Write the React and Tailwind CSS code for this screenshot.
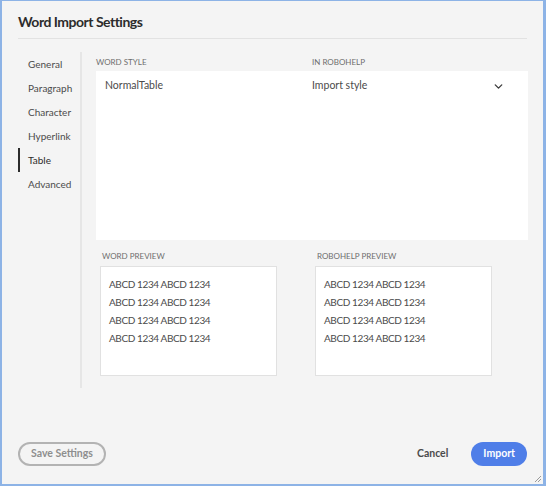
import { ChevronDown } from 'lucide-react';

const tabs = ['General', 'Paragraph', 'Character', 'Hyperlink', 'Table', 'Advanced'];

const PreviewBox = ({ label }) => (
  <div className="flex flex-col w-[177px]">
    <div className="text-[8px] uppercase text-[#6e6e6e] h-[20px] flex items-center pl-[2px]">{label}</div>
    <div className="h-[110px] bg-white border border-[#e1e1e1] pt-[8px] pl-[8px] text-[10px] tracking-[-0.4px] text-[#4b4b4b] leading-[18px]">
      {[...Array(4)].map((_, i) => (
        <div key={i}>ABCD 1234 ABCD 1234</div>
      ))}
    </div>
  </div>
);

export default function App() {
  return (
    <div
      className="w-[546px] h-[486px] bg-[#f4f4f4] border-[#8db3e6] border-t border-l-2 border-r-[3px] border-b-2 flex flex-col relative"
      style={{ fontFamily: 'Lato, "Open Sans", sans-serif' }}
    >
      <div className="mx-[16px] h-[38px] border-b border-[#e2e2e2] flex items-center">
        <h1 className="text-[14px] tracking-[-0.5px] font-bold text-[#2c2c2c] pt-[4px]">Word Import Settings</h1>
      </div>

      <div className="flex flex-1 pl-[16px] pr-[15px] pt-[13px]">
        <div className="w-[64px] border-r-2 border-[#e6e6e6] h-[336px] flex flex-col">
          {tabs.map((t) => (
            <div
              key={t}
              className={`h-[24px] flex items-center pl-[8px] text-[10px] border-l-2 ${
                t === 'Table' ? 'border-[#2c2c2c] text-[#2c2c2c]' : 'border-transparent text-[#4b4b4b]'
              }`}
            >
              {t}
            </div>
          ))}
        </div>

        <div className="flex-1 pl-[14px] flex flex-col">
          <div className="flex text-[8px] uppercase text-[#6e6e6e] h-[19px] items-center">
            <div className="w-[216px]">Word Style</div>
            <div>In Robohelp</div>
          </div>
          <div className="h-[169px] bg-white flex text-[10.5px] text-[#4b4b4b] pt-[7px]">
            <div className="w-[216px] pl-[9px]">NormalTable</div>
            <div className="flex-1 flex justify-between pr-[23px]">
              <span>Import style</span>
              <ChevronDown size={13} strokeWidth={2.5} className="text-[#3c3c3c] mt-[2px]" />
            </div>
          </div>
          <div className="flex gap-[38px] pl-[4px] pt-[6px]">
            <PreviewBox label="Word Preview" />
            <PreviewBox label="Robohelp Preview" />
          </div>
        </div>
      </div>

      <div className="flex items-center justify-between px-[16px] pb-[18px]">
        <button className="h-[24px] px-[11px] rounded-full border-2 border-[#b3b3b3] text-[10.5px] font-bold text-[#8e8e8e]">
          Save Settings
        </button>
        <div className="flex items-center gap-[23px]">
          <button className="text-[10.5px] font-bold text-[#4b4b4b]">Cancel</button>
          <button className="h-[24px] px-[12px] rounded-full bg-[#4f7ee8] text-[10.5px] font-bold text-white">
            Import
          </button>
        </div>
      </div>

      <svg className="absolute right-[1px] bottom-[1px]" width="8" height="8" viewBox="0 0 8 8">
        <path d="M7 1 L1 7 M7 4 L4 7" stroke="#9a9a9a" strokeWidth="1" />
      </svg>
    </div>
  );
}
